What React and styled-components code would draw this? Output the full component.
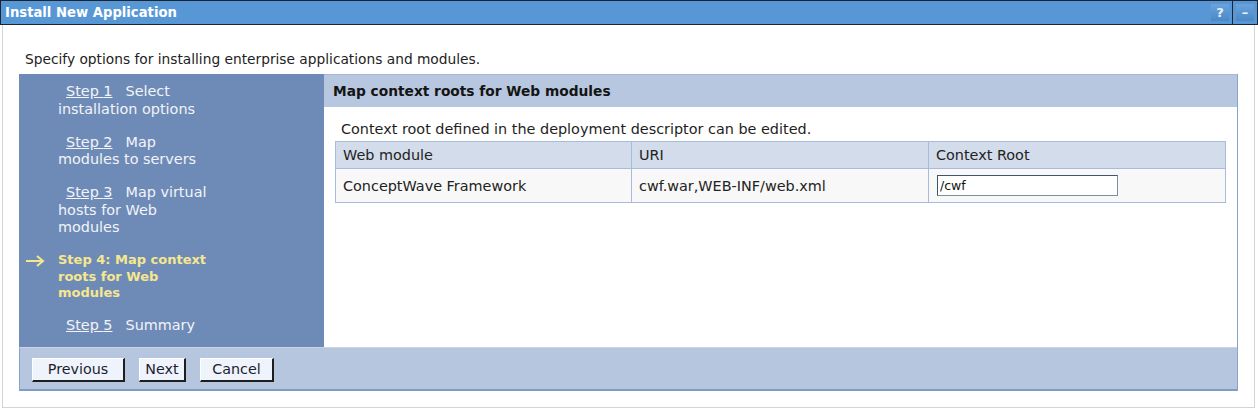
import React, { useState } from 'react';
import styled, { createGlobalStyle } from 'styled-components';

const GlobalStyle = createGlobalStyle`
  html, body {
    margin: 0;
    padding: 0;
    background: #ffffff;
  }
  body {
    font-family: "DejaVu Sans", Verdana, sans-serif;
    font-size: 14.4px;
    color: #1e1e1e;
  }
`;

const Window = styled.div`
  width: 1258px;
  height: 410px;
  display: flex;
  flex-direction: column;
  box-sizing: border-box;
`;

const TitleBar = styled.div`
  height: 25px;
  box-sizing: border-box;
  background: #5797d6;
  border: 1px solid #1c2430;
  display: flex;
  align-items: stretch;
  justify-content: space-between;
`;

const Title = styled.div`
  color: #ffffff;
  font-weight: bold;
  font-size: 13.2px;
  line-height: 23px;
  padding-left: 4px;
`;

const Controls = styled.div`
  display: flex;
  align-items: center;
`;

const CtrlBox = styled.div`
  width: 18px;
  height: 17px;
  margin: 0 3px;
  background: linear-gradient(#6aa3dc, #4c88c6);
  color: #e9f1fb;
  font-weight: bold;
  font-size: 13px;
  line-height: 17px;
  text-align: center;
`;

const CtrlDivider = styled.div`
  width: 1px;
  align-self: stretch;
  background: #1c2430;
`;

const Body = styled.div`
  flex: 1;
  margin: 0 3px 2px 2px;
  border: 1px solid #d4d4d4;
  border-top: none;
  padding: 26px 16px 0 16px;
  box-sizing: border-box;
`;

const Intro = styled.div`
  font-size: 13.75px;
  line-height: 17px;
  margin-bottom: 6px;
  padding-left: 6px;
  color: #222;
`;

const Wizard = styled.div`
  border-right: 1px solid #8aa3c8;
`;

const Main = styled.div`
  display: grid;
  grid-template-columns: 305px 1fr;
  min-height: 273px;
`;

const Nav = styled.div`
  background: #6e8bb7;
  padding: 9px 0 10px 0;
`;

const StepRow = styled.div`
  display: grid;
  grid-template-columns: 39px 157px;
  margin-bottom: ${p => (p.$last ? 0 : 15.5)}px;
`;

const ArrowCell = styled.div`
  display: flex;
  align-items: flex-start;
  padding-top: 3px;
  padding-left: 6px;
`;

const StepText = styled.div`
  line-height: ${p => (p.$current ? 16.5 : 17.5)}px;
  font-size: ${p => (p.$current ? 13 : 14.4)}px;
  color: ${p => (p.$current ? '#f6e78f' : '#f2f4f8')};
  font-weight: ${p => (p.$current ? 'bold' : 'normal')};
  text-indent: ${p => (p.$current ? 0 : 8)}px;
`;

const StepLink = styled.a`
  color: #f2f4f8;
  text-decoration: underline;
  margin-right: 13px;
`;

const Panel = styled.div`
  background: #ffffff;
  display: flex;
  flex-direction: column;
`;

const PanelHeader = styled.div`
  background: #b7c7df;
  border-top: 1px solid #a5b8d6;
  height: 33px;
  box-sizing: border-box;
  padding-left: 9px;
  font-weight: bold;
  font-size: 13.75px;
  line-height: 33px;
  color: #141414;
`;

const PanelBody = styled.div`
  padding: 14px 11px 0 11px;
`;

const Note = styled.div`
  line-height: 17px;
  padding-left: 6px;
  margin-bottom: 3px;
`;

const Table = styled.table`
  width: 100%;
  border-collapse: collapse;
  border: 1px solid #a7bbda;
`;

const HeadCell = styled.th`
  background: #d3dcea;
  border: 1px solid #a7bbda;
  text-align: left;
  font-weight: normal;
  height: 26px;
  padding: 0 7px;
  color: #222;
  width: ${p => p.$w || 'auto'};
`;

const Cell = styled.td`
  background: #f8f8f8;
  border: 1px solid #a7bbda;
  height: 33px;
  padding: 0 ${p => p.$pad || 7}px;
  color: #222;
`;

const TextInput = styled.input`
  width: 181px;
  height: 21px;
  box-sizing: border-box;
  border: 1px solid #7a8ea8;
  border-top-color: #40546e;
  border-left-color: #40546e;
  font-family: "DejaVu Sans", Verdana, sans-serif;
  font-size: 12.5px;
  padding: 0 2px;
  outline: none;
  background: #fff;
  color: #111;
`;

const Footer = styled.div`
  background: #b6c6de;
  border-top: 1px solid #c8d3e6;
  border-bottom: 2px solid #7f9bc6;
  border-left: 1px solid #8aa3c8;
  height: 44px;
  box-sizing: border-box;
  display: flex;
  align-items: center;
  gap: 14px;
  padding-left: 12px;
`;

const Button = styled.button`
  width: ${p => p.$w}px;
  height: 24px;
  box-sizing: border-box;
  background: #eef3fc;
  border: 1px solid #ffffff;
  border-right: 2px solid #1e1e1e;
  border-bottom: 2px solid #1e1e1e;
  padding: 0;
  font-family: "DejaVu Sans", Verdana, sans-serif;
  font-size: 14.3px;
  color: #1e1e2e;
  margin-top: 2px;
`;

const Arrow = () => (
  <svg width="20" height="12" viewBox="0 0 20 12">
    <path d="M1 6H18M12 1l6 5-6 5" stroke="#f6e78f" strokeWidth="2" fill="none" />
  </svg>
);

const steps = [
  { n: 1, label: 'Select installation options' },
  { n: 2, label: 'Map modules to servers' },
  { n: 3, label: 'Map virtual hosts for Web modules' },
  { n: 4, label: 'Map context roots for Web modules', current: true },
  { n: 5, label: 'Summary' },
];

export default function App() {
  const [root, setRoot] = useState('/cwf');

  return (
    <>
      <GlobalStyle />
      <Window>
        <TitleBar>
          <Title>Install New Application</Title>
          <Controls>
            <CtrlBox>?</CtrlBox>
            <CtrlDivider />
            <CtrlBox>–</CtrlBox>
          </Controls>
        </TitleBar>
        <Body>
          <Intro>Specify options for installing enterprise applications and modules.</Intro>
          <Wizard>
            <Main>
              <Nav>
                {steps.map((s, i) => (
                  <StepRow key={s.n} $last={i === steps.length - 1}>
                    <ArrowCell>{s.current && <Arrow />}</ArrowCell>
                    {s.current ? (
                      <StepText $current>Step {s.n}: {s.label}</StepText>
                    ) : (
                      <StepText>
                        <StepLink href="#">Step {s.n}</StepLink>
                        {s.label}
                      </StepText>
                    )}
                  </StepRow>
                ))}
              </Nav>
              <Panel>
                <PanelHeader>Map context roots for Web modules</PanelHeader>
                <PanelBody>
                  <Note>Context root defined in the deployment descriptor can be edited.</Note>
                  <Table>
                    <thead>
                      <tr>
                        <HeadCell $w="281px">Web module</HeadCell>
                        <HeadCell $w="282px">URI</HeadCell>
                        <HeadCell>Context Root</HeadCell>
                      </tr>
                    </thead>
                    <tbody>
                      <tr>
                        <Cell>ConceptWave Framework</Cell>
                        <Cell>cwf.war,WEB-INF/web.xml</Cell>
                        <Cell $pad={8}>
                          <TextInput value={root} onChange={e => setRoot(e.target.value)} />
                        </Cell>
                      </tr>
                    </tbody>
                  </Table>
                </PanelBody>
              </Panel>
            </Main>
            <Footer>
              <Button $w={93}>Previous</Button>
              <Button $w={47}>Next</Button>
              <Button $w={74}>Cancel</Button>
            </Footer>
          </Wizard>
        </Body>
      </Window>
    </>
  );
}
